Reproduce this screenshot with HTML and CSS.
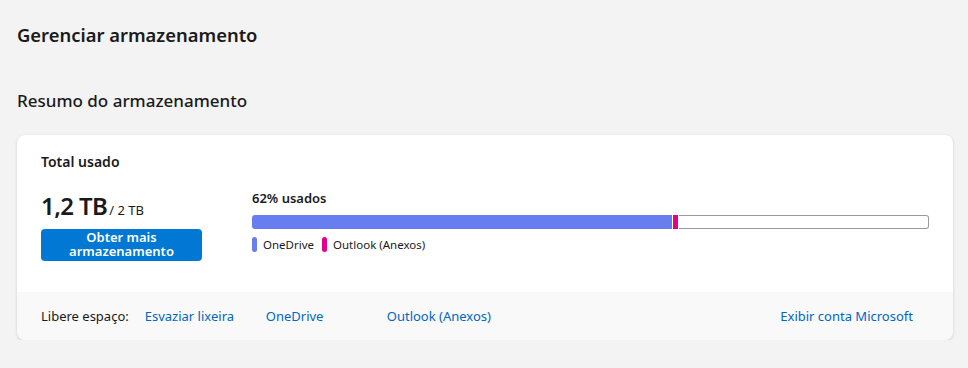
FILE: index.html
```html
<!DOCTYPE html>
<html lang="pt-BR">
<head>
<meta charset="utf-8">
<title>Gerenciar armazenamento</title>
<link rel="stylesheet" href="styles.css">
</head>
<body>
<main class="page">
  <h1 class="page-title">Gerenciar armazenamento</h1>
  <h2 class="section-title">Resumo do armazenamento</h2>
  <section class="card">
    <div class="card-main">
      <div class="card-label">Total usado</div>
      <div class="summary-row">
        <div class="total">
          <div class="total-value"><span class="big">1,2 TB</span><span class="of">/ 2 TB</span></div>
          <button class="btn-primary" type="button">Obter mais armazenamento</button>
        </div>
        <div class="usage">
          <div class="usage-label">62% usados</div>
          <div class="bar">
            <span class="seg seg-onedrive" style="width:420px"></span>
            <span class="seg-gap"></span>
            <span class="seg seg-outlook" style="width:5px"></span>
            <span class="seg-gap"></span>
            <span class="seg-rest"></span>
          </div>
          <div class="legend">
            <span class="legend-item"><span class="pill pill-onedrive"></span>OneDrive</span>
            <span class="legend-item"><span class="pill pill-outlook"></span>Outlook (Anexos)</span>
          </div>
        </div>
      </div>
    </div>
    <div class="card-footer">
      <span class="footer-label">Libere espaço:</span>
      <a class="link" href="#">Esvaziar lixeira</a>
      <a class="link" href="#">OneDrive</a>
      <a class="link" href="#">Outlook (Anexos)</a>
      <a class="link link-end" href="#">Exibir conta Microsoft</a>
    </div>
  </section>
</main>
</body>
</html>
```

FILE: styles.css
```css
* { box-sizing: border-box; }
html, body { margin: 0; padding: 0; }
body {
  background: #f3f3f3;
  font-family: "Noto Sans", "Open Sans", sans-serif;
  color: #1a1a1a;
}
.page {
  padding: 21px 15px 0 17px;
}
.page-title {
  margin: 0;
  font-size: 18.4px;
  line-height: 28px;
  font-weight: 600;
}
.section-title {
  margin: 40px 0 0;
  font-size: 17px;
  line-height: 24px;
  font-weight: 500;
}
.card {
  margin-top: 22px;
  width: 936px;
  background: #fff;
  border-radius: 8px;
  overflow: hidden;
  box-shadow: 0 1px 3px rgba(0,0,0,0.16), 0 0 1px rgba(0,0,0,0.06);
}
.card-main {
  padding: 17px 24px 31px;
}
.card-label {
  font-size: 14px;
  line-height: 20px;
  font-weight: 600;
}
.summary-row {
  display: flex;
  gap: 50px;
  margin-top: 16px;
}
.total {
  width: 161px;
  flex: none;
}
.total-value {
  display: flex;
  align-items: baseline;
  height: 41px;
  padding-top: 2px;
}
.big {
  font-size: 24px;
  line-height: 32px;
  font-weight: 600;
  letter-spacing: -0.6px;
}
.of {
  font-size: 13px;
  margin-left: 2px;
}
.btn-primary {
  display: block;
  width: 161px;
  height: 32px;
  border: none;
  border-radius: 4px;
  background: #0078d4;
  color: #fff;
  font-family: inherit;
  font-size: 13px;
  line-height: 13.5px;
  font-weight: 600;
  padding: 2px 10px 3px;
  text-align: center;
}
.usage {
  flex: 1;
}
.usage-label {
  font-size: 13px;
  line-height: 20px;
  font-weight: 600;
  margin-top: 0;
}
.bar {
  display: flex;
  height: 14px;
  margin-top: 7px;
}
.seg {
  height: 100%;
  flex: none;
}
.seg-onedrive {
  background: #687def;
  border-radius: 3px 0 0 3px;
}
.seg-outlook {
  background: #e3008c;
}
.seg-gap {
  width: 1px;
  flex: none;
}
.seg-rest {
  flex: 1;
  border: 1px solid #999;
  border-left: none;
  border-radius: 0 3px 3px 0;
}
.legend {
  display: flex;
  gap: 8px;
  margin-top: 8px;
  font-size: 11.5px;
  line-height: 15px;
}
.legend-item {
  display: flex;
  align-items: center;
  gap: 6px;
}
.pill {
  width: 5px;
  height: 15px;
  border-radius: 3px;
}
.pill-onedrive { background: #687def; }
.pill-outlook { background: #e3008c; }
.card-footer {
  display: flex;
  align-items: center;
  height: 48px;
  padding: 0 40px 0 24px;
  background: #f9f9f9;
  font-size: 13px;
}
.footer-label {
  margin-right: 16px;
}
.link {
  color: #0067c0;
  text-decoration: none;
  min-width: 121px;
}
.link-end {
  margin-left: auto;
  min-width: 0;
}
```
